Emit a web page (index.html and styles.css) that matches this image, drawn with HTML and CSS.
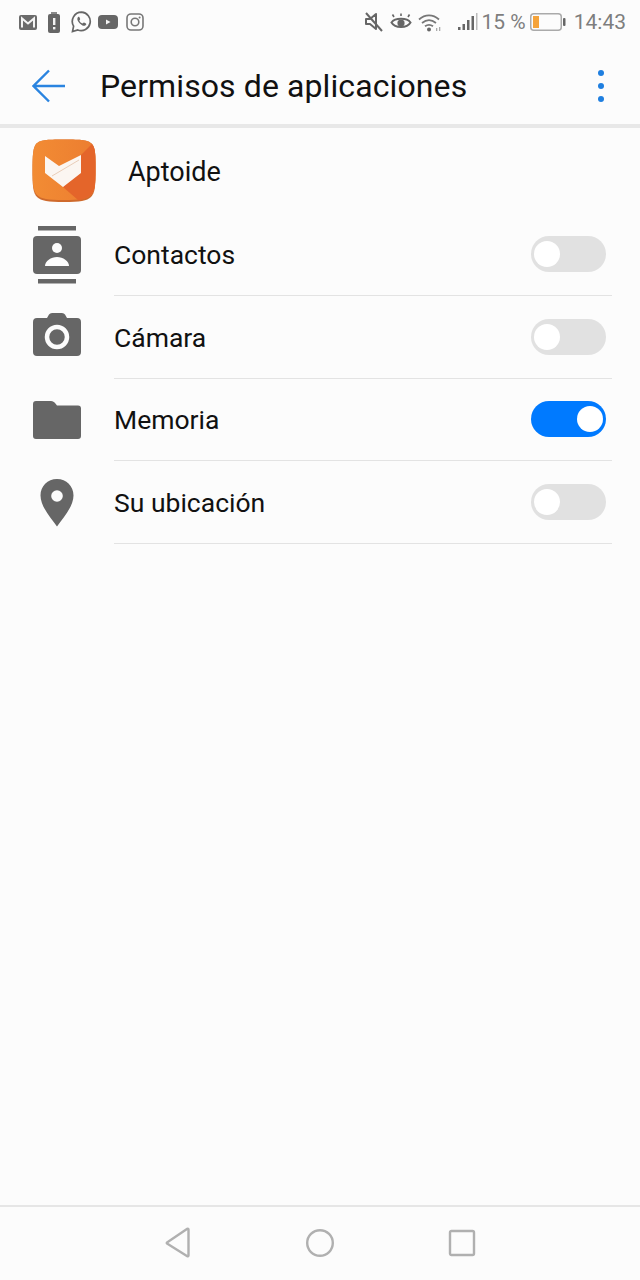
FILE: index.html
```html
<!DOCTYPE html>
<html lang="es">
<head>
<meta charset="utf-8">
<title>Permisos de aplicaciones</title>
<link rel="stylesheet" href="styles.css">
</head>
<body>
<div class="screen">
  <header class="status">
    <div class="status-left">
      <svg class="si" width="18" height="15" viewBox="0 0 18 15"><rect x="0" y="0" width="18" height="15" rx="2" fill="#6b6b6b"/><path d="M3 12.500V3.500L9 8.500L15 3.500V12.500" fill="none" stroke="#f4f4f4" stroke-width="2"/></svg>
      <svg class="si alert" width="12" height="21" viewBox="0 0 12 21"><rect x="3" y="0" width="6" height="2" fill="#8a8a8a"/><rect x="0" y="2" width="12" height="19" rx="2" fill="#666"/><rect x="5" y="6" width="2.400" height="7" fill="#f4f4f4"/><rect x="5" y="15" width="2.400" height="2.400" fill="#f4f4f4"/></svg>
      <svg class="si wa" width="21" height="22" viewBox="0 0 21 22"><path d="M10.500 1.200a9.200 9.200 0 0 0-7.900 13.900L1.500 20.500l5.300-1.500A9.200 9.200 0 1 0 10.500 1.200z" fill="none" stroke="#666" stroke-width="1.700"/><path d="M7.400 5.800c-1.200 1-1.400 2.600-.5 4.300 1 1.800 2.600 3.400 4.600 4.300 1.600.7 3 .3 3.700-1 .2-.5.1-.8-.3-1l-1.800-.9c-.4-.2-.7 0-1 .4l-.6.7c-1.400-.5-2.600-1.700-3.200-3.100l.6-.7c.3-.3.3-.6.2-1l-.8-1.800c-.2-.4-.5-.5-.9-.2z" fill="#666"/></svg>
      <svg class="si yt" width="20" height="14" viewBox="0 0 20 14"><rect width="20" height="14" rx="4" fill="#666"/><path d="M8 4.500L12.500 7L8 9.500z" fill="#f4f4f4"/></svg>
      <svg class="si ig" width="18" height="18" viewBox="0 0 18 18"><rect x="1" y="1" width="16" height="16" rx="4" fill="none" stroke="#777" stroke-width="1.600"/><circle cx="9" cy="9" r="3.800" fill="none" stroke="#777" stroke-width="1.600"/><circle cx="13.600" cy="4.400" r="1" fill="#777"/></svg>
    </div>
    <div class="status-right">
      <svg class="si mute" width="20" height="20" viewBox="0 0 20 20"><path d="M2 7h4l6-5v15l-6-5H2z" fill="none" stroke="#666" stroke-width="2" stroke-linejoin="round"/><path d="M2 1l16 18" stroke="#666" stroke-width="2"/></svg>
      <svg class="si eye" width="22" height="18" viewBox="0 0 22 18"><path d="M1.500 9.500C5 4.500 17 4.500 20.500 9.500C17 15.500 5 15.500 1.500 9.500z" fill="none" stroke="#666" stroke-width="2"/><circle cx="11" cy="10" r="3.600" fill="#666"/><path d="M4 4L2.500 1.500M11 3V.5M18 4L19.500 1.500" stroke="#666" stroke-width="1.600"/></svg>
      <svg class="si wifi" width="24" height="19" viewBox="0 0 24 19"><path d="M1 6.500C7 1 15 1 21 6.500M4 10C8.500 6.300 13.500 6.300 18 10M7 13.300C9.800 11.200 12.200 11.200 15 13.300" fill="none" stroke="#777" stroke-width="1.700"/><circle cx="11" cy="16.500" r="2" fill="#666"/><rect x="18" y="15" width="1.300" height="3" fill="#aaa"/><rect x="21" y="14" width="1.300" height="4" fill="#aaa"/></svg>
      <svg class="si signal" width="20" height="18" viewBox="0 0 20 18"><rect x="0" y="14" width="2.500" height="3" fill="#666"/><rect x="4.500" y="11" width="2.500" height="6" fill="#666"/><rect x="9" y="7" width="2.500" height="10" fill="#666"/><rect x="13.500" y="3" width="2.500" height="14" fill="#666"/><rect x="18" y="0" width="1.500" height="17" fill="#bbb"/></svg>
      <span class="stat-text pct">15 %</span>
      <svg class="si batt" width="36" height="18" viewBox="0 0 36 18"><rect x=".75" y=".75" width="30.500" height="16.500" rx="3" fill="none" stroke="#aaa" stroke-width="1.500"/><rect x="3" y="3" width="6" height="12" fill="#f5a33a"/><rect x="33" y="5" width="2.500" height="8" rx="1" fill="#666"/></svg>
      <span class="stat-text time">14:43</span>
    </div>
  </header>

  <div class="appbar">
    <svg class="back" width="34" height="34" viewBox="0 0 34 34"><path d="M33 17H2M17 1.500L1.500 17L17 32.500" fill="none" stroke="#2a84e0" stroke-width="2.400"/></svg>
    <h1 class="title">Permisos de aplicaciones</h1>
    <div class="more"><i></i><i></i><i></i></div>
  </div>

  <main class="content">
    <div class="app-row">
      <svg class="app-icon" width="64" height="64" viewBox="0 0 64 64">
        <defs>
          <linearGradient id="ag" x1="0" y1="0" x2="1" y2="0"><stop offset="0" stop-color="#f28c34"/><stop offset="1" stop-color="#ec7d30"/></linearGradient>
        </defs>
        <path d="M32 0.500C50 0.500 56 1 60 5C63.500 9 63.500 16 63.500 31C63.500 47 63 54 59 58C55 62 48 63 32 63C16 63 9 62 5 58C1 54 .5 47 .5 31C.5 16 1 9 4 5C8 1 14 .5 32 .5z" fill="#cf6a2c"/>
        <path d="M32 0.500C50 0.500 56 1 60 5C63.500 9 63.500 16 63.500 30C63.500 45 63 52 59 56C55 60 48 61 32 61C16 61 9 60 5 56C1 52 .5 45 .5 30C.5 16 1 9 4 5C8 1 14 .5 32 .5z" fill="url(#ag)"/>
        <path d="M49 16L60 5C63.500 9 63.500 16 63.500 30C63.500 45 63 52 59 56C55 60 48 61 46 61L31 48z" fill="#e4652a"/>
        <path d="M13 17L27 27L49 16V34L31 48L13 34z" fill="#fbf6f1"/>
        <path d="M20 37L47 21" stroke="#e9cdb8" stroke-width="1"/>
      </svg>
      <span class="app-name">Aptoide</span>
    </div>
    <ul class="perms">
      <li class="perm">
        <span class="perm-icon"><svg class="ic-contact" width="48" height="58" viewBox="0 0 48 58"><rect x="5" y="0" width="38" height="4.500" fill="#666"/><rect x="5" y="53" width="38" height="4.500" fill="#666"/><rect x="0" y="10" width="48" height="38" rx="4" fill="#666"/><circle cx="24" cy="22" r="5" fill="#fcfcfc"/><path d="M12 40c0-5 6-9 12-9s12 4 12 9z" fill="#fcfcfc"/></svg></span>
        <span class="perm-body"><span class="perm-name">Contactos</span><span class="switch"></span></span>
      </li>
      <li class="perm">
        <span class="perm-icon"><svg class="ic-camera" width="48" height="44" viewBox="0 0 48 44"><path d="M4 5h10l2-3.500Q17 0 19 0h10q2 0 3 1.500L34 5h10a4 4 0 0 1 4 4v30a4 4 0 0 1-4 4H4a4 4 0 0 1-4-4V9a4 4 0 0 1 4-4z" fill="#666"/><circle cx="24" cy="24" r="10" fill="none" stroke="#fcfcfc" stroke-width="4.500"/></svg></span>
        <span class="perm-body"><span class="perm-name">Cámara</span><span class="switch"></span></span>
      </li>
      <li class="perm">
        <span class="perm-icon"><svg width="48" height="38" viewBox="0 0 48 38"><path d="M3 0h15c2 0 3 1 4 2l2 2.500h21a3 3 0 0 1 3 3V35a3 3 0 0 1-3 3H3a3 3 0 0 1-3-3V3a3 3 0 0 1 3-3z" fill="#666"/></svg></span>
        <span class="perm-body"><span class="perm-name">Memoria</span><span class="switch on"></span></span>
      </li>
      <li class="perm">
        <span class="perm-icon"><svg width="34" height="48" viewBox="0 0 34 48"><path d="M17 0C7.500 0 .5 7.200 .5 16.500C.5 27 10 38 17 47.500C24 38 33.500 27 33.500 16.500C33.500 7.200 26.500 0 17 0z" fill="#666"/><circle cx="17" cy="17" r="5.800" fill="#fcfcfc"/></svg></span>
        <span class="perm-body"><span class="perm-name">Su ubicación</span><span class="switch"></span></span>
      </li>
    </ul>
  </main>

  <nav class="navbar">
    <svg width="28" height="32" viewBox="0 0 28 32"><path d="M24.500 2.500V28.500a.8.800 0 0 1-1.200.7L3 16.500a.6.600 0 0 1 0-1L23.300 1.800a.8.800 0 0 1 1.200.7z" fill="none" stroke="#b0b0b0" stroke-width="2.400" stroke-linejoin="round"/></svg>
    <svg width="30" height="30" viewBox="0 0 30 30"><circle cx="15" cy="15" r="12.800" fill="none" stroke="#b0b0b0" stroke-width="2.400"/></svg>
    <svg width="28" height="28" viewBox="0 0 28 28"><rect x="2" y="2" width="24" height="24" rx="1.500" fill="none" stroke="#b0b0b0" stroke-width="2.400"/></svg>
  </nav>
</div>
</body>
</html>
```
FILE: styles.css
```css
* { box-sizing: border-box; }
html, body { margin: 0; padding: 0; }
body {
  background: #fcfcfc;
  font-family: Roboto, "Liberation Sans", sans-serif;
  color: #111;
}
.screen {
  width: 640px;
  height: 1280px;
  display: flex;
  flex-direction: column;
  overflow: hidden;
}
.status {
  height: 44px;
  flex: none;
  display: flex;
  align-items: center;
  justify-content: space-between;
  padding: 0 14px 0 19px;
}
.status-left, .status-right { display: flex; align-items: center; }
.si { display: block; flex: none; }
.alert { margin-left: 11px; }
.wa { margin-left: 11px; }
.yt { margin-left: 6px; }
.ig { margin-left: 8px; }
.eye { margin-left: 6px; }
.wifi { margin-left: 6px; }
.signal { margin-left: 16px; }
.stat-text { font-size: 21px; color: #7e7e7e; line-height: 24px; }
.pct { margin-left: 4px; }
.batt { margin-left: 4px; }
.time { margin-left: 8px; }
.appbar {
  height: 84px;
  flex: none;
  display: flex;
  align-items: center;
  padding: 4px 36px 0 32px;
  border-bottom: 4px solid #e8e8e8;
}
.back { flex: none; }
.title {
  margin: 0 0 0 34px;
  flex: 1;
  font-size: 32px;
  letter-spacing: .1px;
  font-weight: 400;
  line-height: 40px;
  color: #111;
}
.more { display: flex; flex-direction: column; gap: 7px; }
.more i { display: block; width: 6px; height: 6px; border-radius: 50%; background: #1f7fe0; }
.content { flex: 1; }
.app-row {
  height: 85px;
  display: flex;
  align-items: center;
  padding: 0 0 0 32px;
}
.app-icon { flex: none; }
.app-name { margin: 2px 0 0 32px; font-size: 27px; line-height: 32px; }
.perms { list-style: none; margin: 0; padding: 0; }
.perm { height: 82.75px; display: flex; align-items: stretch; }
.perm-icon { width: 114px; flex: none; display: flex; align-items: center; justify-content: center; }
.ic-contact { margin-top: 2px; }
.ic-camera { margin-bottom: 5px; }
.perm-body {
  flex: none;
  width: 498px;
  display: flex;
  align-items: center;
  justify-content: space-between;
  padding-right: 6px;
  border-bottom: 1px solid #e3e3e3;
}
.perm-name { margin-top: 2px; font-size: 26.5px; line-height: 32px; }
.switch {
  display: block;
  position: relative;
  width: 75px;
  height: 36px;
  border-radius: 18px;
  background: #e1e1e1;
}
.switch::after {
  content: "";
  position: absolute;
  top: 5px;
  left: 3px;
  width: 26px;
  height: 26px;
  border-radius: 50%;
  background: #fff;
}
.switch.on { background: #007aff; }
.switch.on::after { left: auto; right: 3px; }
.navbar {
  height: 75px;
  flex: none;
  border-top: 2px solid #e6e6e6;
  display: flex;
  align-items: center;
  justify-content: center;
  gap: 113px;
  padding: 0 0 2px 0;
}
```
